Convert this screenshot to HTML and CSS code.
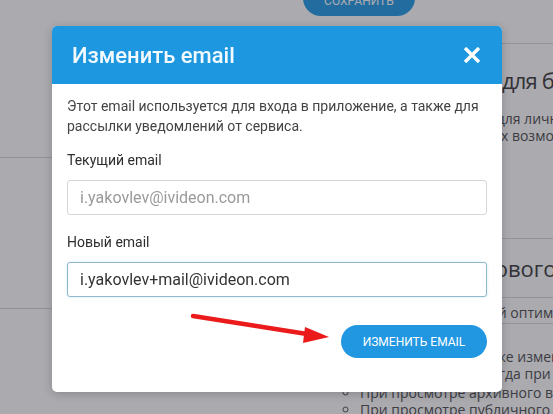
FILE: index.html
```html
<!DOCTYPE html>
<html lang="ru">
<head>
    <meta charset="UTF-8">
    <meta name="viewport" content="width=device-width, initial-scale=1.0">
    <title>Изменить email</title>
    <link rel="stylesheet" href="styles.css">
</head>
<body>
    <div class="page">
        <div class="topbar">
            <button class="save-btn">Сохранить</button>
        </div>
        <div class="columns">
            <div class="col-left">
                <div class="rule rule-1"></div>
                <div class="rule rule-2"></div>
            </div>
            <div class="col-right">
                <section class="block block-1">
                    <h3>Облачный офис для бизнеса</h3>
                    <p>Оптимальный вариант для личного использования<br>Включает набор базовых возможностей</p>
                </section>
                <section class="block block-2">
                    <h3>Уровень потокового видео</h3>
                </section>
                <section class="block block-3">
                    <p>Режим с автоматической оптимизацией</p>
                </section>
                <section class="block block-4">
                    <p>Разрешение можно также изменить<br>Качество изменяется тогда при</p>
                    <ul>
                        <li>При просмотре архивного видео</li>
                        <li>При просмотре публичного видео</li>
                    </ul>
                </section>
            </div>
        </div>
    </div>

    <div class="overlay"></div>

    <div class="modal">
        <div class="modal-head">
            <h2 class="modal-title">Изменить email</h2>
            <svg class="modal-close" width="18" height="16" viewBox="0 0 18 16">
                <path d="M2 1 L16 15 M16 1 L2 15" stroke="#fff" stroke-width="3.4" stroke-linecap="butt"/>
            </svg>
        </div>
        <div class="modal-body">
            <p class="intro">Этот email используется для входа в приложение, а также для рассылки уведомлений от сервиса.</p>

            <label class="field-label" for="current-email">Текущий email</label>
            <input class="field-input" id="current-email" type="text" placeholder="i.yakovlev@ivideon.com">

            <label class="field-label field-label-new" for="new-email">Новый email</label>
            <input class="field-input is-focus" id="new-email" type="text" value="i.yakovlev+mail@ivideon.com">

            <div class="modal-foot">
                <button class="submit-btn">Изменить email</button>
            </div>
        </div>

        <svg class="hint-arrow" width="145" height="40" viewBox="0 0 145 40">
            <path d="M3 4 L117 22" stroke="#ec1b1b" stroke-width="4.5" stroke-linecap="round"/>
            <polygon points="139,25 115,15 113,31" fill="#ec1b1b"/>
        </svg>
    </div>
</body>
</html>
```

FILE: styles.css
```css
* {
    box-sizing: border-box;
}
body {
    margin: 0;
    width: 553px;
    height: 414px;
    overflow: hidden;
    font-family: "Open Sans", Arial, sans-serif;
    background: #fff;
    color: #555;
}

/* page behind the dialog */
.page {
    margin-top: -20px;
}
.topbar {
    height: 36px;
    padding-left: 303px;
}
.save-btn {
    width: 112px;
    height: 36px;
    padding-top: 6px;
    border: 0;
    border-radius: 18px;
    background: #2d9fe6;
    color: #fff;
    font-family: Roboto, sans-serif;
    font-size: 12px;
    text-transform: uppercase;
}
.columns {
    display: flex;
    margin-top: 27px;
}
.col-left {
    flex: none;
    width: 335px;
}
.rule {
    border-top: 1px solid #d8d8d8;
}
.rule-1 {
    margin-top: 114px;
}
.rule-2 {
    margin-top: 150px;
}
.col-right {
    flex: none;
    width: 420px;
}
.block {
    border-top: 1px solid #dcdcdc;
}
.block h3 {
    margin: 0;
    font-size: 22px;
    font-weight: 400;
    line-height: 28px;
    color: #444;
    white-space: nowrap;
}
.block-1 h3 {
    letter-spacing: -0.8px;
}
.block p {
    margin: 0;
    font-size: 14px;
    line-height: 17px;
    white-space: nowrap;
}
.block-1 {
    height: 195px;
    padding-top: 22px;
}
.block-1 p {
    margin-top: 16px;
}
.block-2 {
    height: 59px;
    padding-top: 15px;
}
.block-3 {
    height: 26px;
    padding-top: 6px;
}
.block-4 {
    padding-top: 24px;
}
.block ul {
    margin: 2px 0 0;
    padding-left: 25px;
    list-style: circle;
    font-size: 14px;
    line-height: 17px;
    white-space: nowrap;
}

.overlay {
    position: fixed;
    inset: 0;
    background: rgba(20, 20, 32, 0.36);
}

/* dialog */
.modal {
    position: absolute;
    left: 52px;
    top: 26px;
    width: 450px;
    background: #fff;
    border-radius: 5px;
    overflow: hidden;
    box-shadow: 0 2px 10px rgba(0, 0, 0, 0.2);
    font-family: Roboto, sans-serif;
}
.modal-head {
    display: flex;
    align-items: center;
    justify-content: space-between;
    height: 58px;
    padding: 0 21px 0 20px;
    background: #1d97e0;
}
.modal-title {
    margin: 0;
    font-size: 22px;
    font-weight: 500;
    color: #f2faff;
}
.modal-body {
    padding: 12px 15px 34px;
}
.intro {
    margin: 0;
    font-size: 14px;
    line-height: 20px;
    color: #444;
}
.field-label {
    display: block;
    margin-top: 14px;
    font-size: 14px;
    line-height: 20px;
    color: #2e2e2e;
}
.field-label-new {
    margin-top: 17px;
}
.field-input {
    display: block;
    width: 100%;
    height: 35px;
    margin-top: 10px;
    padding: 0 12px;
    border: 1px solid #d6d6d6;
    border-radius: 3px;
    font-family: Roboto, sans-serif;
    font-size: 16px;
    color: #333;
}
.field-input::placeholder {
    color: #9a9a9a;
}
.field-input.is-focus {
    border-color: #8fb8cc;
    box-shadow: 0 0 3px rgba(120, 200, 230, 0.35);
}
.modal-foot {
    display: flex;
    justify-content: flex-end;
    margin-top: 28px;
}
.submit-btn {
    width: 146px;
    height: 33px;
    border: 0;
    border-radius: 17px;
    background: #2197e2;
    color: #fff;
    font-family: Roboto, sans-serif;
    font-size: 12px;
    text-transform: uppercase;
}
.hint-arrow {
    position: absolute;
    left: 138px;
    top: 286px;
}
```
